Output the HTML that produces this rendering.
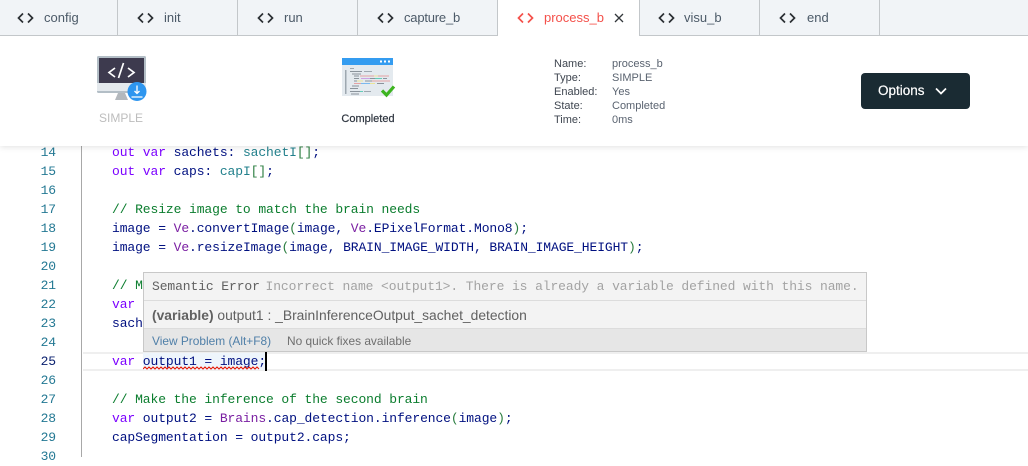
<!DOCTYPE html>
<html><head><meta charset="utf-8">
<style>
*{box-sizing:border-box}
html,body{margin:0;padding:0;width:1028px;height:457px;overflow:hidden;background:#fff;font-family:"Liberation Sans",sans-serif}
.a{position:absolute}
.tab{position:absolute;top:0;height:36px;background:#f1f4f7;border-right:1px solid #c3c7ca;border-bottom:1px solid #c3c7ca}
.tab svg{position:absolute;left:17px;top:12px}
.tab span{position:absolute;left:44px;top:10px;font-size:13px;line-height:16px;color:#4c5a68;white-space:nowrap}
.info{position:absolute;font-size:11px;line-height:14px;color:#3f4650;white-space:nowrap}
.ln{position:absolute;width:56px;left:0;text-align:right;font:13px/19px "Liberation Mono",monospace;letter-spacing:-.1px;color:#237893;height:19px}
.c{position:absolute;left:112px;font:13px/19px "Liberation Mono",monospace;letter-spacing:-.1px;color:#001080;white-space:pre;height:19px}
.k{color:#7b00ff}.t{color:#22808c}.p{color:#7a1fa2}.m{color:#0b7d2e}.b{color:#2a7d3f}
</style></head><body>

<!-- code area -->
<div class="a" style="left:81px;top:146px;width:1px;height:311px;background:#a8a8a8"></div>
<div class="a" style="left:83px;top:352px;width:945px;height:19px;border-top:2px solid #efefef;border-bottom:2px solid #efefef"></div>
<div class="a" style="left:143px;top:353px;width:122px;height:17px;background:#eef5fc"></div>

<div class="ln" style="top:143px">14</div>
<div class="ln" style="top:162px">15</div>
<div class="ln" style="top:181px">16</div>
<div class="ln" style="top:200px">17</div>
<div class="ln" style="top:219px">18</div>
<div class="ln" style="top:238px">19</div>
<div class="ln" style="top:257px">20</div>
<div class="ln" style="top:276px">21</div>
<div class="ln" style="top:295px">22</div>
<div class="ln" style="top:314px">23</div>
<div class="ln" style="top:333px">24</div>
<div class="ln" style="top:352px;color:#0b216f">25</div>
<div class="ln" style="top:371px">26</div>
<div class="ln" style="top:390px">27</div>
<div class="ln" style="top:409px">28</div>
<div class="ln" style="top:428px">29</div>
<div class="ln" style="top:447px">30</div>

<div class="c" style="top:143px"><span class="k">out var</span> sachets: <span class="t">sachetI</span><span class="b">[]</span>;</div>
<div class="c" style="top:162px"><span class="k">out var</span> caps: <span class="t">capI</span><span class="b">[]</span>;</div>
<div class="c m" style="top:200px">// Resize image to match the brain needs</div>
<div class="c" style="top:219px">image = <span class="p">Ve</span>.convertImage<span class="b">(</span>image, <span class="p">Ve</span>.EPixelFormat.Mono8<span class="b">)</span>;</div>
<div class="c" style="top:238px">image = <span class="p">Ve</span>.resizeImage<span class="b">(</span>image, BRAIN_IMAGE_WIDTH, BRAIN_IMAGE_HEIGHT<span class="b">)</span>;</div>
<div class="c m" style="top:276px">// M</div>
<div class="c k" style="top:295px">var</div>
<div class="c" style="top:314px">sach</div>
<div class="c" style="top:352px"><span class="k">var</span> output1 = image;</div>
<div class="c m" style="top:390px">// Make the inference of the second brain</div>
<div class="c" style="top:409px"><span class="k">var</span> output2 = <span class="p">Brains</span>.cap_detection.inference<span class="b">(</span>image<span class="b">)</span>;</div>
<div class="c" style="top:428px">capSegmentation = output2.caps;</div>

<svg class="a" style="left:143px;top:366px" width="124" height="5"><path d="M0 3 l2-2 2 2 2-2 2 2 2-2 2 2 2-2 2 2 2-2 2 2 2-2 2 2 2-2 2 2 2-2 2 2 2-2 2 2 2-2 2 2 2-2 2 2 2-2 2 2 2-2 2 2 2-2 2 2 2-2 2 2 2-2 2 2 2-2 2 2 2-2 2 2 2-2 2 2 2-2 2 2 2-2 2 2 2-2 2 2 2-2 2 2 2-2 2 2 2-2 2 2 2-2 2 2 2-2 2 2 2-2 2 2 2-2 2 2" fill="none" stroke="#e51400" stroke-width="1"/></svg>
<div class="a" style="left:265px;top:352px;width:2px;height:19px;background:#000"></div>

<!-- tooltip -->
<div class="a" style="left:143px;top:272px;width:724px;height:80px;background:#f3f3f3;border:1px solid #c8c8c8">
  <div class="a" style="left:0;top:0;width:722px;height:28px;border-bottom:1px solid #dcdcdc"></div>
  <div class="a" style="left:0;top:55px;width:722px;height:23px;background:#e6e6e6;border-top:1px solid #dcdcdc"></div>
  <div class="a" style="left:8px;top:4px;font:13px/19px 'Liberation Mono',monospace;letter-spacing:-.1px;color:#616161;white-space:pre">Semantic Error <span style="color:#a3a3a3;margin-left:-2px">Incorrect name &lt;output1&gt;. There is already a variable defined with this name.</span></div>
  <div class="a" style="left:8px;top:34px;font-size:13.85px;line-height:16px;color:#616161;white-space:nowrap"><b>(variable)</b> output1 : _BrainInferenceOutput_sachet_detection</div>
  <div class="a" style="left:8px;top:60px;font-size:11.9px;line-height:16px;color:#4f7fa8;white-space:nowrap">View Problem (Alt+F8)</div>
  <div class="a" style="left:143px;top:60px;font-size:11.9px;line-height:16px;color:#6f6f6f;white-space:nowrap">No quick fixes available</div>
</div>

<!-- header panel -->
<div class="a" style="left:0;top:36px;width:1028px;height:110px;background:#fff;box-shadow:0 1px 6px rgba(0,0,0,.12)"></div>

<!-- tabs -->
<div class="tab" style="left:0;width:118px"><svg width="18" height="12" viewBox="0 0 18 12"><path d="M6 1.5 1.5 6 6 10.500M11 1.500 15.500 6 11 10.500" fill="none" stroke="#2b2f33" stroke-width="1.700"/></svg><span>config</span></div>
<div class="tab" style="left:118px;width:120px"><svg style="left:19px" width="18" height="12" viewBox="0 0 18 12"><path d="M6 1.5 1.5 6 6 10.500M11 1.500 15.500 6 11 10.500" fill="none" stroke="#2b2f33" stroke-width="1.700"/></svg><span style="left:46px">init</span></div>
<div class="tab" style="left:238px;width:120px"><svg style="left:19px" width="18" height="12" viewBox="0 0 18 12"><path d="M6 1.5 1.5 6 6 10.500M11 1.500 15.500 6 11 10.500" fill="none" stroke="#2b2f33" stroke-width="1.700"/></svg><span style="left:46px">run</span></div>
<div class="tab" style="left:358px;width:140px"><svg style="left:19px" width="18" height="12" viewBox="0 0 18 12"><path d="M6 1.5 1.5 6 6 10.500M11 1.500 15.500 6 11 10.500" fill="none" stroke="#2b2f33" stroke-width="1.700"/></svg><span style="left:46px;letter-spacing:-.2px">capture_b</span></div>
<div class="tab" style="left:498px;width:142px;background:#fff;border-bottom:none;border-right:1px solid #c3c7ca">
  <svg style="left:19px" width="18" height="12" viewBox="0 0 18 12"><path d="M6 1.5 1.5 6 6 10.500M11 1.500 15.500 6 11 10.500" fill="none" stroke="#f4504a" stroke-width="1.700"/></svg>
  <span style="left:46px;color:#f4504a">process_b</span>
  <svg style="left:116px;top:13px" width="10" height="10" viewBox="0 0 10 10"><path d="M1 1 9 9M9 1 1 9" stroke="#33383c" stroke-width="1.300"/></svg>
</div>
<div class="tab" style="left:640px;width:120px"><svg style="left:18px" width="18" height="12" viewBox="0 0 18 12"><path d="M6 1.5 1.5 6 6 10.500M11 1.500 15.500 6 11 10.500" fill="none" stroke="#2b2f33" stroke-width="1.700"/></svg><span style="left:44px">visu_b</span></div>
<div class="tab" style="left:760px;width:120px"><svg style="left:19px" width="18" height="12" viewBox="0 0 18 12"><path d="M6 1.5 1.5 6 6 10.500M11 1.500 15.500 6 11 10.500" fill="none" stroke="#2b2f33" stroke-width="1.700"/></svg><span style="left:47px">end</span></div>
<div class="a" style="left:880px;top:0;width:148px;height:36px;background:#f1f4f7;border-bottom:1px solid #c3c7ca"></div>

<!-- monitor icon -->
<svg class="a" style="left:97px;top:56px" width="50" height="46" viewBox="0 0 50 46">
  <rect x="0" y="0" width="49" height="37" rx="1.500" fill="#b3bec6"/>
  <rect x="2" y="2" width="45" height="25" fill="#3d3a4e"/>
  <rect x="0" y="27" width="49" height="8" fill="#e4e9ed"/>
  <path d="M21 37h7l3 7H18z" fill="#b3b8bd"/>
  <path d="M18 12 12 16.500l6 4.500M31 12l6 4.500-6 4.500M21.500 22l5-15" fill="none" stroke="#fff" stroke-width="1.700"/>
  <circle cx="40" cy="35.500" r="9.500" fill="#2e96ef"/>
  <path d="M40 29.500v8M37.500 35 40 37.500l2.500-2.500M34.500 41h11" fill="none" stroke="#fff" stroke-width="1.300"/>
</svg>
<div class="a" style="left:90px;top:111px;width:62px;text-align:center;font-size:12px;line-height:15px;color:#bdbdbd">SIMPLE</div>

<!-- completed icon -->
<svg class="a" style="left:342px;top:57px" width="54" height="42" viewBox="0 0 54 42">
  <rect x="0" y="1" width="51" height="38" fill="#e4eaef"/>
  <rect x="0" y="1" width="51" height="7" fill="#349cf0"/>
  <rect x="38" y="3.500" width="2" height="2" fill="#fff"/><rect x="42" y="3.500" width="2" height="2" fill="#fff"/><rect x="46" y="3.500" width="2" height="2" fill="#fff"/>
  <g opacity=".75">
  <rect x="3" y="13" width="1.500" height="24" fill="#87929c"/>
  <rect x="8" y="11" width="4" height="1" fill="#87929c"/>
  <rect x="8" y="14" width="12" height="1" fill="#6d7680"/><rect x="22" y="14" width="8" height="1" fill="#87929c"/>
  <rect x="10" y="16.500" width="9" height="1" fill="#6d7680"/>
  <rect x="12" y="18.500" width="5" height="1" fill="#6d7680"/><rect x="18" y="18.500" width="14" height="1" fill="#e58a8a"/><rect x="32" y="18.500" width="4" height="1" fill="#eee27a"/><rect x="36" y="18.500" width="11" height="1" fill="#e58a8a"/>
  <rect x="12" y="21" width="5" height="1" fill="#6d7680"/><rect x="19" y="21" width="9" height="1" fill="#c58ae0"/><rect x="28" y="21" width="5" height="1" fill="#6d7680"/><rect x="33" y="21" width="7" height="1" fill="#38c2a8"/><rect x="41" y="21" width="4" height="1" fill="#6d7680"/>
  <rect x="12" y="23.500" width="3" height="1" fill="#6d7680"/><rect x="15" y="23.500" width="6" height="1" fill="#eee27a"/><rect x="23" y="23.500" width="7" height="1" fill="#6d7680"/><rect x="30" y="23.500" width="18" height="1" fill="#e58a8a"/>
  <rect x="12" y="26" width="7" height="1" fill="#e58a8a"/><rect x="19" y="26" width="9" height="1" fill="#58a9ee"/><rect x="28" y="26" width="5" height="1" fill="#eee27a"/><rect x="35" y="26" width="7" height="1" fill="#6d7680"/>
  <rect x="10" y="28.500" width="7" height="1" fill="#6d7680"/>
  <rect x="8" y="31" width="8" height="1" fill="#6d7680"/>
  <rect x="8" y="34" width="12" height="1" fill="#6d7680"/><rect x="18" y="34" width="3" height="1" fill="#38c2a8"/><rect x="22" y="34" width="7" height="1" fill="#87929c"/>
  <rect x="9" y="36.500" width="8" height="1" fill="#6d7680"/>
  </g>
  <path d="M40 33.500 44.500 38 52 29.500" fill="none" stroke="#3db420" stroke-width="3.200"/>
</svg>
<div class="a" style="left:328px;top:112px;width:80px;text-align:center;font-size:11px;line-height:14px;color:#2f3640;-webkit-text-stroke:.2px #2f3640">Completed</div>

<!-- info -->
<div class="info" style="left:554px;top:57px">Name:<br>Type:<br>Enabled:<br>State:<br>Time:</div>
<div class="info" style="left:612px;top:57px;color:#5a6370">process_b<br>SIMPLE<br>Yes<br>Completed<br>0ms</div>

<!-- options -->
<div class="a" style="left:861px;top:73px;width:109px;height:36px;background:#1a2b33;border-radius:4px">
  <span class="a" style="left:17px;top:9px;font-size:13.5px;line-height:17px;color:#fff;-webkit-text-stroke:.2px #fff">Options</span>
  <svg class="a" style="left:74px;top:14px" width="12" height="9" viewBox="0 0 12 9"><path d="M1 1.500 6 6.500l5-5" fill="none" stroke="#fff" stroke-width="1.700"/></svg>
</div>

</body></html>
